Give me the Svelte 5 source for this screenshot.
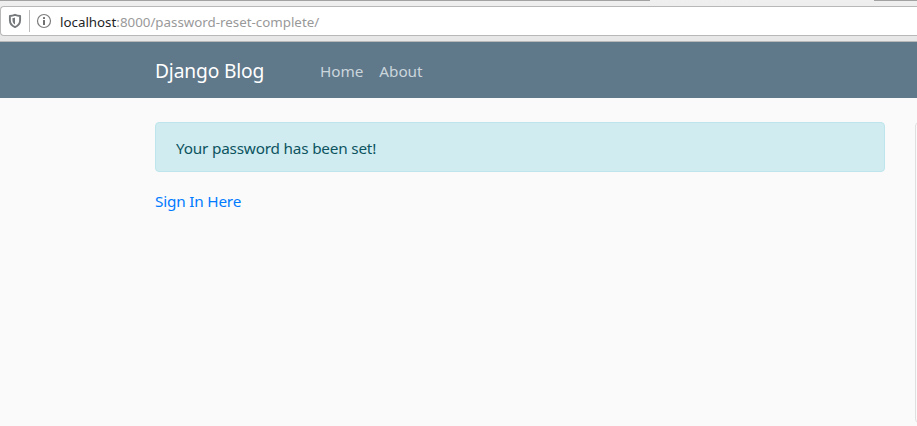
<script>
  const links = ['Home', 'About'];
</script>

<div class="window">
  <div class="chrome">
    <div class="tabs"><span></span><span></span></div>
    <div class="url-bar">
      <svg class="shield" width="14" height="16" viewBox="0 0 14 16">
        <path d="M7 1.800C5.300 2.500 3.600 2.900 1.900 3v4.200c0 3.200 1.700 5.400 5.100 6.900 3.400-1.500 5.100-3.700 5.100-6.900V3C10.400 2.900 8.700 2.500 7 1.800Z" fill="none" stroke="#76797c" stroke-width="1.900" stroke-linejoin="round" />
        <path d="M7 4.400v7.100c-1.700-1-2.500-2.300-2.500-4.200V5.100C5.400 5 6.200 4.700 7 4.400Z" fill="#76797c" />
      </svg>
      <i class="divider"></i>
      <svg class="info" width="16" height="16" viewBox="0 0 16 16">
        <circle cx="8" cy="8" r="6.500" fill="none" stroke="#7c7c7c" stroke-width="1.200" />
        <rect x="7" y="4" width="2" height="2" rx=".5" fill="#707070" />
        <rect x="7" y="7" width="2" height="5" rx=".3" fill="#707070" />
      </svg>
      <span class="address"><b>localhost</b>:8000/password-reset-complete/</span>
    </div>
  </div>
  <nav>
    <a class="brand" href="#home">Django Blog</a>
    {#each links as link}
      <a class="link" href="#{link}">{link}</a>
    {/each}
  </nav>
  <main>
    <section>
      <div class="alert">Your password has been set!</div>
      <a class="signin" href="#signin">Sign In Here</a>
    </section>
    <aside></aside>
  </main>
</div>

<style>
  :global(body) { margin: 0; }
  .window {
    width: 917px;
    height: 426px;
    overflow: hidden;
    display: flex;
    flex-direction: column;
    background: #fafafa;
    font-family: 'Noto Sans', 'Open Sans', sans-serif;
    font-size: 15.3px;
    letter-spacing: -0.19px;
    line-height: 24px;
  }
  .chrome {
    height: 42px;
    flex: none;
    box-sizing: border-box;
    background: linear-gradient(#efefef, #e7e7e7);
    border-bottom: 1px solid #b8b8b8;
  }
  .tabs { height: 6px; display: flex; justify-content: space-between; }
  .tabs span { height: 1px; width: 43px; background: #a3a1a3; }
  .tabs span:first-child { width: 650px; }
  .url-bar {
    height: 30px;
    box-sizing: border-box;
    display: flex;
    align-items: center;
    background: #fff;
    border: 1px solid #b8b8b8;
    border-right: 0;
    border-radius: 4px 0 0 4px;
    padding-left: 7px;
    font-size: 13.33px;
    letter-spacing: 0;
  }
  .divider { width: 1px; height: 22px; margin: 0 6px 0 7px; background: #bdbdbd; }
  .address { margin-left: 8px; margin-top: 2px; color: #999; white-space: nowrap; }
  .address b { font-weight: 400; color: #222426; }
  nav {
    height: 56px;
    flex: none;
    box-sizing: border-box;
    display: flex;
    align-items: center;
    padding: 2px 0 0 155px;
    background: #5f788a;
  }
  a { text-decoration: none; }
  .brand { width: 157px; font-size: 19.2px; letter-spacing: -0.15px; color: #fff; white-space: nowrap; }
  .link { padding: 4px 8px; letter-spacing: -0.05px; color: #cbd5dc; }
  main { display: flex; padding: 24px 0 0 155px; }
  section { width: 730px; flex: none; }
  .alert {
    height: 50px;
    box-sizing: border-box;
    padding: 13px 20px 11px;
    margin-bottom: 16px;
    border: 1px solid #bee5eb;
    border-radius: 4px;
    background: #d1ecf1;
    color: #0c5460;
  }
  .signin { display: block; padding-top: 1px; color: #007bff; }
  aside {
    width: 255px;
    height: 301px;
    flex: none;
    box-sizing: border-box;
    margin-left: 30px;
    border: 1px solid #dfdfdf;
    border-radius: 4px;
  }
</style>
